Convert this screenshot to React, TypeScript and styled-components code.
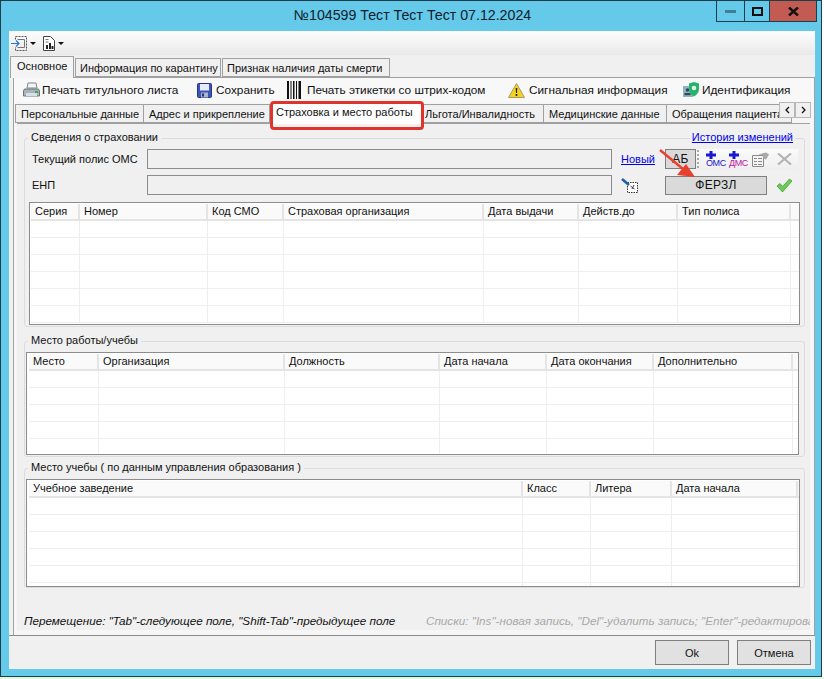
import React from "react";
import styled, { createGlobalStyle } from "styled-components";

const Global = createGlobalStyle`
  html, body { margin: 0; padding: 0; background: #fff; }
  * { box-sizing: border-box; }
  body { font-family: "Liberation Sans", Arial, sans-serif; font-size: 11px; color: #111; }
`;

const Page = styled.div`
  position: relative;
  width: 824px;
  height: 679px;
  overflow: hidden;
  background: #fff;
`;
const GreenStrip = styled.div`
  height: 2px;
  background: #dcfbdc;
`;
const Frame = styled.div`
  width: 822px;
  height: 677px;
  border: 1px solid #1d3c4c;
  background: #65c9ea;
  display: flex;
  flex-direction: column;
  padding: 0 6px 7px 8px;
`;
const TitleBar = styled.div`
  height: 30px;
  margin-left: -8px;
  margin-right: -6px;
  flex: none;
  display: grid;
  grid-template-columns: 1fr auto 1fr;
  align-items: start;
`;
const Title = styled.div`
  grid-column: 2;
  font-size: 14.2px;
  line-height: 29px;
  padding-left: 3px;
  color: #10202a;
`;
const Caption = styled.div`
  grid-column: 3;
  justify-self: end;
  display: flex;
  margin-right: 4px;
  height: 21px;
  border: 1px solid #1d3c4c;
  border-top: none;
`;
const CaptionBtn = styled.div<{ $w: number; $bg?: string }>`
  width: ${(p) => p.$w}px;
  background: ${(p) => p.$bg || "transparent"};
  border-right: 1px solid #1d3c4c;
  display: flex;
  align-items: center;
  justify-content: center;
  &:last-child { border-right: none; }
`;
const Client = styled.div`
  flex: 1;
  background: #f0f0f0;
  display: flex;
  flex-direction: column;
  min-height: 0;
`;
const TopStrip = styled.div`
  height: 24px;
  flex: none;
  background: linear-gradient(#fdfdfd, #e9e9e9);
  display: flex;
  align-items: center;
  padding-left: 2px;
  gap: 7px;
`;
const StripBtn = styled.div`
  display: flex;
  align-items: center;
  gap: 3px;
`;
const Caret = styled.span`
  width: 0;
  height: 0;
  border-left: 3px solid transparent;
  border-right: 3px solid transparent;
  border-top: 3px solid #111;
`;
const OuterTabs = styled.div`
  height: 22px;
  flex: none;
  display: flex;
  align-items: flex-end;
  padding-left: 1px;
  position: relative;
  z-index: 1;
`;
const OuterTab = styled.div<{ $w: number; $active?: boolean }>`
  width: ${(p) => p.$w}px;
  height: ${(p) => (p.$active ? 22 : 19)}px;
  margin-right: 1px;
  margin-bottom: ${(p) => (p.$active ? -1 : 0)}px;
  border: 1px solid #a0a0a0;
  border-bottom: ${(p) => (p.$active ? "none" : "1px solid #a0a0a0")};
  background: ${(p) => (p.$active ? "#f4f4f4" : "#f0f0f0")};
  padding-left: ${(p) => (p.$active ? 6 : 4)}px;
  line-height: ${(p) => (p.$active ? 19 : 18)}px;
  white-space: nowrap;
  font-size: 11px;
`;
const OuterPanel = styled.div`
  margin-left: 4px;
  height: 558px;
  flex: none;
  border: 1px solid #a0a0a0;
  border-bottom: none;
  background: #f6f6f6;
  display: flex;
  flex-direction: column;
`;
const ToolRow = styled.div`
  height: 24px;
  flex: none;
  display: flex;
  align-items: center;
  padding-left: 9px;
  background: #f8f8f8;
  font-size: 11.8px;
`;
const ToolItem = styled.div<{ $w: number; $gap: number }>`
  width: ${(p) => p.$w}px;
  display: flex;
  align-items: center;
  gap: ${(p) => p.$gap}px;
  white-space: nowrap;
  flex: none;
`;
const InnerTabs = styled.div`
  height: 21px;
  flex: none;
  display: flex;
  align-items: flex-end;
  padding-left: 1px;
  position: relative;
  z-index: 1;
`;
const InnerTab = styled.div<{ $w: number; $active?: boolean; $pl?: number }>`
  position: relative;
  width: ${(p) => p.$w}px;
  height: ${(p) => (p.$active ? 22 : 19)}px;
  margin-bottom: ${(p) => (p.$active ? -1 : 0)}px;
  flex: none;
  border: ${(p) => (p.$active ? "none" : "1px solid #a0a0a0")};
  border-left: none;
  background: ${(p) => (p.$active ? "#fff" : "#f0f0f0")};
  padding-left: ${(p) => p.$pl ?? 5}px;
  line-height: ${(p) => (p.$active ? 20 : 18)}px;
  white-space: nowrap;
  overflow: hidden;
  font-size: 11px;
  &:first-child { border-left: 1px solid #a0a0a0; }
`;
const RedRing = styled.div`
  position: absolute;
  left: 270px;
  top: 101px;
  width: 154px;
  height: 29px;
  border: 3px solid #e0332c;
  border-radius: 4px;
  z-index: 4;
  pointer-events: none;
`;
const ScrollBtns = styled.div`
  position: absolute;
  left: 765px;
  top: 0;
  display: flex;
  height: 16px;
`;
const ScrollBtn = styled.div`
  width: 16px;
  height: 16px;
  background: #f0f0f0;
  border: 1px solid #b8b8b8;
  display: flex;
  align-items: center;
  justify-content: center;
`;
const InnerPanel = styled.div`
  flex: 1;
  min-height: 0;
  margin: 0 4px 5px 3px;
  border-top: 1px solid #a0a0a0;
  background: #f0f0f0;
  display: flex;
  flex-direction: column;
  padding: 14px 5px 0 7px;
  overflow: hidden;
`;
const Group = styled.section<{ $h: number; $mb: number; $pl: number; $pt: number }>`
  position: relative;
  height: ${(p) => p.$h}px;
  margin-bottom: ${(p) => p.$mb}px;
  flex: none;
  border: 1px solid #dcdcdc;
  border-radius: 3px;
  padding: ${(p) => p.$pt}px 0 0 ${(p) => p.$pl}px;
`;
const Legend = styled.span`
  position: absolute;
  left: 3px;
  top: -8px;
  padding: 0 3px;
  background: #f0f0f0;
  line-height: 13px;
  font-size: 11px;
  white-space: nowrap;
`;
const HistoryLink = styled.a`
  position: absolute;
  right: 9px;
  top: -8px;
  padding: 0 2px;
  background: #f0f0f0;
  color: #0000ee;
  text-decoration: underline;
  line-height: 13px;
  font-size: 11px;
`;
const FormRow = styled.div<{ $h: number; $mb: number }>`
  display: flex;
  align-items: center;
  height: ${(p) => p.$h}px;
  margin-bottom: ${(p) => p.$mb}px;
  padding-left: 3px;
`;
const Label = styled.div`
  width: 115px;
  flex: none;
  font-size: 11px;
  white-space: nowrap;
`;
const Field = styled.div`
  width: 465px;
  height: 100%;
  flex: none;
  border: 1px solid #8c8c8c;
  background: #f0f0f0;
`;
const NewLink = styled.a`
  width: 44px;
  margin-left: 9px;
  flex: none;
  color: #0000ee;
  text-decoration: underline;
  font-size: 11px;
`;
const FieldIcon = styled.div`
  width: 44px;
  margin-left: 9px;
  flex: none;
  display: flex;
`;
const GreyBtn = styled.div<{ $w: number; $h: number }>`
  width: ${(p) => p.$w}px;
  height: ${(p) => p.$h}px;
  flex: none;
  background: #dadada;
  border: 1px solid #7f7f7f;
  display: flex;
  align-items: center;
  justify-content: center;
  font-size: 12px;
  letter-spacing: 0.3px;
`;
const MiniBar = styled.div`
  display: flex;
  align-items: center;
  height: 21px;
  width: 102px;
  padding-left: 1px;
  background: linear-gradient(#fafafa, #eeeeee);
  flex: none;
`;
const Grip = styled.div`
  width: 2px;
  height: 18px;
  margin-right: 7px;
  background: repeating-linear-gradient(#a8a8a8 0 2px, transparent 2px 4px);
`;
const Stack = styled.div<{ $w: number }>`
  width: ${(p) => p.$w}px;
  flex: none;
  display: flex;
  flex-direction: column;
  align-items: flex-start;
`;
const StackText = styled.span<{ $c: string }>`
  font-size: 9px;
  line-height: 7px;
  margin-top: 1px;
  letter-spacing: -0.4px;
  color: ${(p) => p.$c};
`;
const Check = styled.div`
  margin-left: 9px;
  display: flex;
`;
const GridBox = styled.div<{ $w: number; $h: number; $p: number }>`
  width: ${(p) => p.$w}px;
  height: ${(p) => p.$h}px;
  border: 1px solid #8c8c8c;
  background: #fff;
  overflow: hidden;
  padding-left: ${(p) => p.$p}px;
`;
const GridRow = styled.div<{ $cols: string; $head?: boolean }>`
  display: grid;
  grid-template-columns: ${(p) => p.$cols};
  height: 17px;
  border-bottom: ${(p) => (p.$head ? "2px solid #e4e4e4" : "1px solid #eeeeee")};
  margin-top: ${(p) => (p.$head ? 1 : 0)}px;
  background: ${(p) => (p.$head ? "#fafafa" : "transparent")};
`;
const GridCell = styled.div<{ $head?: boolean }>`
  border-right: ${(p) => (p.$head ? "2px solid #e4e4e4" : "1px solid #eeeeee")};
  padding-left: 4px;
  font-size: 11px;
  line-height: 15px;
  white-space: nowrap;
  overflow: hidden;
  &:last-child { border-right: none; }
`;
const Hints = styled.div`
  margin-top: 26px;
  display: flex;
  font-style: italic;
  font-size: 11.7px;
  white-space: nowrap;
`;
const HintDark = styled.span`
  width: 402px;
  flex: none;
  color: #111;
`;
const HintGrey = styled.span`
  color: #a8a8a8;
`;
const ButtonBar = styled.div`
  flex: 1;
  border-top: 1px solid #8c8c8c;
  display: flex;
  justify-content: flex-end;
  align-items: flex-start;
  padding: 4px 4px 0 0;
  gap: 8px;
`;
const DialogBtn = styled.div`
  width: 74px;
  height: 25px;
  background: #e1e1e1;
  border: 1px solid #7f7f7f;
  display: flex;
  align-items: center;
  justify-content: center;
  font-size: 11px;
`;
const ArrowOverlay = styled.svg`
  position: absolute;
  left: 655px;
  top: 145px;
  z-index: 5;
`;

const Printer = () => (
  <svg width="17" height="16" viewBox="0 0 17 16">
    <path d="M5 1h8l1 5H4z" fill="#f4f4f4" stroke="#7d8790" />
    <path d="M1.500 7h14l1 2v5H.5V9z" fill="#a9b4bd" stroke="#67727b" />
    <rect x="3" y="11" width="11" height="3" fill="#d9dfe3" />
    <rect x="12" y="9" width="3" height="2" fill="#26b34a" />
  </svg>
);
const Floppy = () => (
  <svg width="15" height="15" viewBox="0 0 15 15">
    <rect x=".5" y=".5" width="14" height="14" rx="1" fill="#3d55b8" stroke="#28367e" />
    <rect x="3" y="1" width="9" height="6.500" fill="#e8ecf8" />
    <rect x="4" y="9.500" width="7" height="5" fill="#aab3cf" />
    <rect x="5" y="10.500" width="2" height="3" fill="#2b3560" />
  </svg>
);
const Barcode = () => (
  <svg width="14" height="18" viewBox="0 0 14 18">
    <path d="M0 0h2v18H0zM3.500 0h1v18h-1zM6 0h1.500v18H6zM9 0h1v18H9zM11.500 0H14v18h-2.500z" fill="#111" />
  </svg>
);
const Warn = () => (
  <svg width="17" height="15" viewBox="0 0 17 15">
    <path d="M8.500 .5 16.500 14.500H.5z" fill="#f5d21f" stroke="#a89a66" />
    <path d="M7.700 5h1.600l-.3 5H8zM7.700 11h1.600v2H7.700z" fill="#222" />
  </svg>
);
const Ident = () => (
  <svg width="17" height="16" viewBox="0 0 17 16">
    <rect x="0" y="4" width="10" height="11" fill="#8fb3c4" />
    <circle cx="4.500" cy="8" r="1.800" fill="#2f4a58" />
    <rect x="1.500" y="11" width="6" height="2.200" fill="#2f4a58" />
    <path d="M6 1.500 11 0l5 1.500V7c0 3.500-2.500 6-5 7.500C8.500 13 6 10.500 6 7z" fill="#27b26b" />
    <circle cx="11" cy="6" r="2.300" fill="#dff7ea" />
  </svg>
);
const TopIcon1 = () => (
  <svg width="16" height="15" viewBox="0 0 16 15">
    <path d="M4.500 3.500V.5h11v14h-11V11" fill="none" stroke="#555" strokeDasharray="2 1" />
    <path d="M6.500 3.500h7v8h-7" fill="none" stroke="#777" />
    <path d="M0 7.500h8M5 4.500l3 3-3 3" fill="none" stroke="#2a78d0" strokeWidth="1.200" />
  </svg>
);
const TopIcon2 = () => (
  <svg width="12" height="15" viewBox="0 0 12 15">
    <path d="M.5.5h7l4 4v10H.5z" fill="#fff" stroke="#444" />
    <path d="M2.500 3.500h3M2.500 6h3" stroke="#777" />
    <path d="M3 9h2v4H3zM6 7h2v6H6zM8.500 10h2v3h-2z" fill="#222" />
  </svg>
);
const Cross = () => (
  <svg width="10" height="8" viewBox="0 0 10 8">
    <path d="M3.500 0h3v2.500h3.500v3H6.500V8h-3V5.500H0v-3h3.500z" fill="#1818d0" />
  </svg>
);
const FormIcon = () => (
  <svg width="17" height="15" viewBox="0 0 17 15">
    <path d="M.5 3.500h11v11H.5z" fill="#f4f4f4" stroke="#8a8a8a" />
    <path d="M2 6.500h3M6 6.500h4M2 9.500h3M6 9.500h4M2 12.500h3M6 12.500h4" stroke="#8a8a8a" />
    <path d="M6 2.500 14 .5l3 2-3 5-3-1V3z" fill="#a8a8a8" />
  </svg>
);
const XIcon = () => (
  <svg width="15" height="12" viewBox="0 0 15 12">
    <path d="M1 .5 14 11.500M14 .5 1 11.500" stroke="#b4b4b4" strokeWidth="2.200" />
  </svg>
);
const WandIcon = () => (
  <svg width="17" height="15" viewBox="0 0 17 15">
    <path d="M6.500 4.500h10v10h-10z" fill="#fff" stroke="#333" strokeDasharray="1.500 1" />
    <path d="M1 1l7 6" stroke="#1d5fa8" strokeWidth="2.600" />
    <path d="M9.500 8l4 3M13 7l-2 4" stroke="#444" />
  </svg>
);
const CheckIcon = () => (
  <svg width="17" height="15" viewBox="0 0 17 15">
    <path d="M1 8l3-2.500 2.500 3L13.500 1 16 3 6.500 14z" fill="#6ccb55" stroke="#4a9a3e" strokeWidth=".8" />
  </svg>
);

const DataGrid = ({ w, h, p, cols, heads, rows }: { w: number; h: number; p: number; cols: string; heads: string[]; rows: number }) => (
  <GridBox $w={w} $h={h} $p={p}>
    <GridRow $cols={cols} $head>
      {heads.map((t, i) => (
        <GridCell $head key={i}>{t}</GridCell>
      ))}
    </GridRow>
    {Array.from({ length: rows }).map((_, r) => (
      <GridRow $cols={cols} key={r}>
        {heads.map((_t, i) => (
          <GridCell key={i} />
        ))}
      </GridRow>
    ))}
  </GridBox>
);

const grid1 = "49px 128px 76px 200px 95px 99px 113px 10px";
const heads1 = ["Серия", "Номер", "Код СМО", "Страховая организация", "Дата выдачи", "Действ.до", "Тип полиса", ""];
const grid2 = "70px 186px 155px 107px 107px 139px 6px";
const heads2 = ["Место", "Организация", "Должность", "Дата начала", "Дата окончания", "Дополнительно", ""];
const grid3 = "494px 68px 81px 126px 2px";
const heads3 = ["Учебное заведение", "Класс", "Литера", "Дата начала", ""];

export default function App() {
  return (
    <Page>
      <Global />
      <Frame>
        <TitleBar>
          <Title>№104599 Тест Тест Тест 07.12.2024</Title>
          <Caption>
            <CaptionBtn $w={28}>
              <svg width="11" height="4"><rect width="11" height="3" y="1" fill="#3f7f95" /></svg>
            </CaptionBtn>
            <CaptionBtn $w={25}>
              <svg width="11" height="9"><rect x="1" y="1" width="9" height="7" fill="none" stroke="#111" strokeWidth="2" /></svg>
            </CaptionBtn>
            <CaptionBtn $w={46} $bg="#c25b52">
              <svg width="11" height="9"><path d="M1 .5 10 8.500M10 .5 1 8.500" stroke="#111" strokeWidth="2.400" /></svg>
            </CaptionBtn>
          </Caption>
        </TitleBar>
        <Client>
          <TopStrip>
            <StripBtn><TopIcon1 /><Caret /></StripBtn>
            <StripBtn><TopIcon2 /><Caret /></StripBtn>
          </TopStrip>
          <OuterTabs>
            <OuterTab $w={64} $active>Основное</OuterTab>
            <OuterTab $w={146}>Информация по карантину</OuterTab>
            <OuterTab $w={168}>Признак наличия даты смерти</OuterTab>
          </OuterTabs>
          <OuterPanel>
            <ToolRow>
              <ToolItem $w={174} $gap={2}><Printer />Печать титульного листа</ToolItem>
              <ToolItem $w={90} $gap={4}><Floppy />Сохранить</ToolItem>
              <ToolItem $w={221} $gap={6}><Barcode />Печать этикетки со штрих-кодом</ToolItem>
              <ToolItem $w={175} $gap={4}><Warn />Сигнальная информация</ToolItem>
              <ToolItem $w={110} $gap={2}><Ident />Идентификация</ToolItem>
            </ToolRow>
            <InnerTabs>
              <InnerTab $w={129}>Персональные данные</InnerTab>
              <InnerTab $w={126}>Адрес и прикрепление</InnerTab>
              <InnerTab $w={153} $active $pl={6}>Страховка и место работы</InnerTab>
              <InnerTab $w={121} $pl={2}>Льгота/Инвалидность</InnerTab>
              <InnerTab $w={123}>Медицинские данные</InnerTab>
              <InnerTab $w={125}>Обращения пациента</InnerTab>
              <ScrollBtns>
                <ScrollBtn><svg width="5" height="8"><path d="M4 1 1 4l3 3" fill="none" stroke="#111" strokeWidth="1.300" /></svg></ScrollBtn>
                <ScrollBtn><svg width="5" height="8"><path d="M1 1l3 3-3 3" fill="none" stroke="#111" strokeWidth="1.300" /></svg></ScrollBtn>
              </ScrollBtns>
            </InnerTabs>
            <InnerPanel>
              <Group $h={189} $mb={14} $pl={4} $pt={10}>
                <Legend>Сведения о страховании</Legend>
                <HistoryLink>История изменений</HistoryLink>
                <FormRow $h={20} $mb={6}>
                  <Label>Текущий полис ОМС</Label>
                  <Field />
                  <NewLink>Новый</NewLink>
                  <GreyBtn $w={31} $h={20}>АБ</GreyBtn>
                  <MiniBar>
                    <Grip />
                    <Stack $w={23}><Cross /><StackText $c="#1818c8">ОМС</StackText></Stack>
                    <Stack $w={23}><Cross /><StackText $c="#c010a0">ДМС</StackText></Stack>
                    <Stack $w={25}><FormIcon /></Stack>
                    <Stack $w={16}><XIcon /></Stack>
                  </MiniBar>
                </FormRow>
                <FormRow $h={20} $mb={7}>
                  <Label>ЕНП</Label>
                  <Field />
                  <FieldIcon><WandIcon /></FieldIcon>
                  <GreyBtn $w={102} $h={19}>ФЕРЗЛ</GreyBtn>
                  <Check><CheckIcon /></Check>
                </FormRow>
                <DataGrid w={771} h={123} p={1} cols={grid1} heads={heads1} rows={6} />
              </Group>
              <Group $h={116} $mb={11} $pl={1} $pt={10}>
                <Legend>Место работы/учебы</Legend>
                <DataGrid w={773} h={103} p={2} cols={grid2} heads={heads2} rows={5} />
              </Group>
              <Group $h={120} $mb={0} $pl={1} $pt={10}>
                <Legend>Место учебы ( по данным управления образования )</Legend>
                <DataGrid w={774} h={108} p={2} cols={grid3} heads={heads3} rows={6} />
              </Group>
              <Hints>
                <HintDark>Перемещение: "Tab"-следующее поле, "Shift-Tab"-предыдущее поле</HintDark>
                <HintGrey>Списки: "Ins"-новая запись, "Del"-удалить запись; "Enter"-редактировать запись</HintGrey>
              </Hints>
            </InnerPanel>
          </OuterPanel>
          <ButtonBar>
            <DialogBtn>Ok</DialogBtn>
            <DialogBtn>Отмена</DialogBtn>
          </ButtonBar>
        </Client>
      </Frame>
      <GreenStrip />
      <RedRing />
      <ArrowOverlay width="45" height="36" viewBox="0 0 45 36">
        <path d="M5 5 28 24" stroke="#e8402e" strokeWidth="2.400" />
        <path d="M40 32 22 30 31 19z" fill="#e8402e" />
      </ArrowOverlay>
    </Page>
  );
}
